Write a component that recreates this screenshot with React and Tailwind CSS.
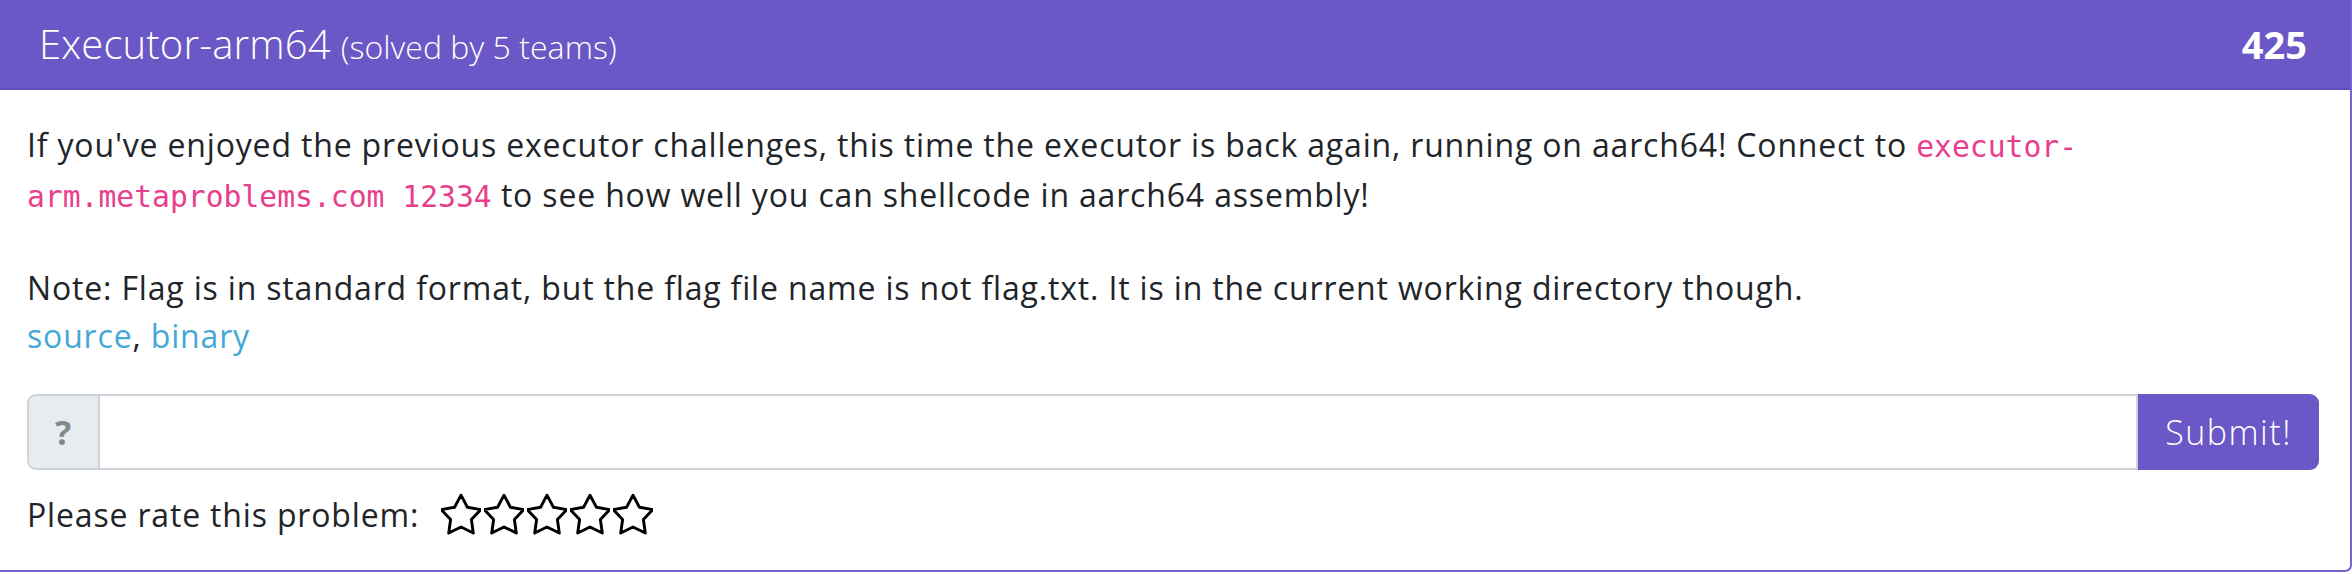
import React from "react";

function Star() {
  return (
    <svg width="40" height="44" viewBox="1 0 22 24" className="block">
      <path
        d="M12 1.1L15.53 7.75L22.94 9.05L17.71 14.45L18.76 21.9L12 18.6L5.24 21.9L6.29 14.45L1.06 9.05L8.47 7.75Z"
        fill="none"
        stroke="#000"
        strokeWidth="1.6"
        strokeLinejoin="round"
      />
    </svg>
  );
}

export default function App() {
  const sans = { fontFamily: '"Open Sans", "Noto Sans", sans-serif' };
  return (
    <div className="w-[2352px] h-[574px] bg-white overflow-hidden" style={sans}>
      <div className="h-[572px] border-r-2 border-b-2 border-[#7464cc] rounded-br-[7px] flex flex-col">
        <div className="h-[90px] bg-[#6b57c5] border-b-2 border-[#5f4dba] flex items-center justify-between pl-[39px] pr-[43px] text-white">
          <div className="flex items-baseline">
            <span className="text-[40px] font-light tracking-[0.15px]">Executor-arm64</span>
            <span className="text-[32px] ml-[10px] font-light tracking-[0.05px]">(solved by 5 teams)</span>
          </div>
          <span className="text-[38px] font-bold">425</span>
        </div>
        <div className="px-[27px] pt-[31px] text-[#212529] text-[32px] leading-[48px] tracking-[0.83px]">
          <p className="mb-[43px]">
            If you've enjoyed the previous executor challenges, this time the executor is back again, running on aarch64! Connect to{" "}
            <code className="text-[#e83e8c] text-[29.7px] tracking-normal" style={{ fontFamily: '"DejaVu Sans Mono", monospace' }}>
              executor-<br />arm.metaproblems.com 12334
            </code>{" "}
            to see how well you can shellcode in aarch64 assembly!
          </p>
          <p>
            Note: Flag is in standard format, but the flag file name is not flag.txt. It is in the current working directory though.
          </p>
          <p>
            <a className="text-[#45a8d6]">source</a>, <a className="text-[#45a8d6]">binary</a>
          </p>
          <div className="mt-[34px] flex h-[76px] w-[2292px]">
            <div className="w-[73px] bg-[#e9ecef] border-2 border-[#ced4da] rounded-l-[9px] flex items-center justify-center text-[#7d8b8c] font-bold text-[34px]">
              ?
            </div>
            <div className="flex-1 border-y-2 border-r-2 border-[#ced4da] bg-white"></div>
            <button className="w-[181px] bg-[#6b57c5] text-white rounded-r-[9px] text-[34px] font-light tracking-[1.5px]">
              Submit!
            </button>
          </div>
          <div className="mt-[21px] flex items-center h-[48px]">
            <span>Please rate this problem:</span>
            <div className="flex ml-[22px] gap-[3px]">
              <Star /><Star /><Star /><Star /><Star />
            </div>
          </div>
        </div>
      </div>
    </div>
  );
}
